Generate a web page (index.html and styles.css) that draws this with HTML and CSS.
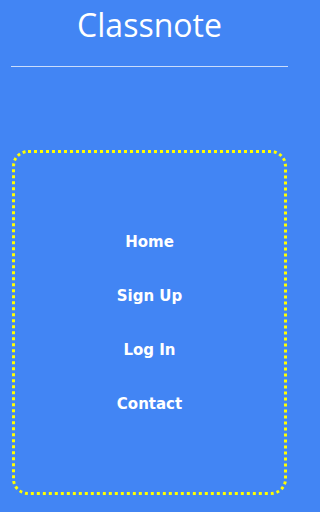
FILE: index.html
```html
<!DOCTYPE html>
<html lang="en">
<head>
<meta charset="utf-8">
<title>Classnote</title>
<link rel="stylesheet" href="styles.css">
</head>
<body>
<header class="header">
  <h1 class="title">Classnote</h1>
  <hr class="divider">
</header>
<nav class="menu">
  <a class="menu-item" href="#">Home</a>
  <a class="menu-item" href="#">Sign Up</a>
  <a class="menu-item" href="#">Log In</a>
  <a class="menu-item" href="#">Contact</a>
</nav>
</body>
</html>
```

FILE: styles.css
```css
html, body {
  margin: 0;
  padding: 0;
  background: #4285f4;
}
body {
  width: 299px;
  height: 512px;
  overflow: hidden;
}
.header {
  display: flex;
  flex-direction: column;
}
.title {
  margin: 3px 0 0 0;
  font-family: "Open Sans", "Noto Sans", sans-serif;
  font-weight: 400;
  font-size: 32px;
  line-height: 44px;
  color: #ffffff;
  text-align: center;
}
.divider {
  margin: 19px 11px 0 11px;
  border: none;
  height: 1px;
  background: rgba(255, 255, 255, 0.72);
}
.menu {
  margin: 83px 12px 0 12px;
  height: 345px;
  box-sizing: border-box;
  border: 3px dotted #ffff00;
  border-radius: 16px;
  display: flex;
  flex-direction: column;
  align-items: center;
  justify-content: center;
  gap: 34px;
}
.menu-item {
  font-family: "DejaVu Sans", Verdana, sans-serif;
  font-weight: 700;
  font-size: 15px;
  line-height: 20px;
  color: #ffffff;
  text-decoration: none;
}
```
